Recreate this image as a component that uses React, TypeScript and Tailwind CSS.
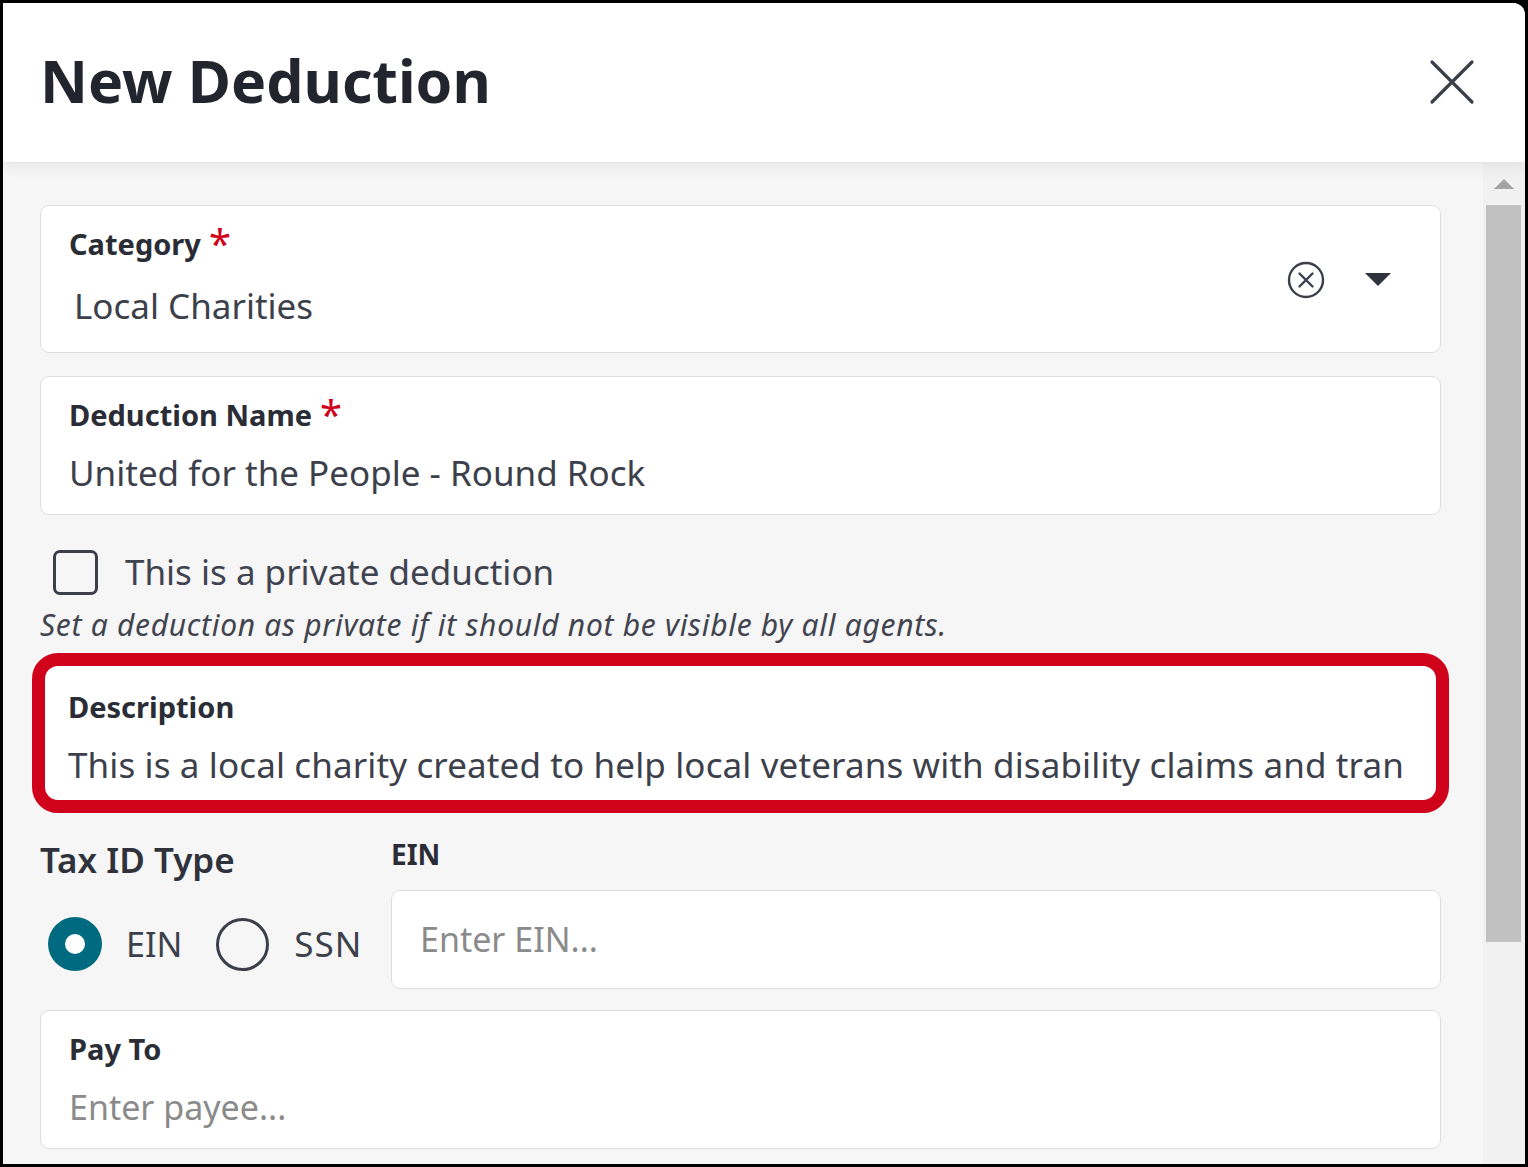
import React from "react";

const font = { fontFamily: "'Noto Sans', Lato, sans-serif" };

function Label({ children, required }: { children: React.ReactNode; required?: boolean }) {
  return (
    <div className="flex items-start h-[36px] leading-[36px] text-[29px] font-bold text-[#2a2d36]">
      <span>{children}</span>
      {required && <span className="ml-[8px] text-[#d0021b] text-[40px] leading-[34px] font-normal">*</span>}
    </div>
  );
}

export default function App() {
  return (
    <div className="w-[1528px] h-[1167px] bg-black p-[3px]" style={font}>
      <div className="w-full h-full bg-white rounded-tr-[12px] overflow-hidden flex flex-col">
        {/* Header */}
        <div className="relative z-10 h-[160px] shrink-0 bg-white flex items-center justify-between pl-[37px] pr-[50px] shadow-[0_3px_14px_rgba(0,0,0,0.07)] border-b border-[#e6e6e6]">
          <h1 className="text-[59px] font-bold text-[#23252e] leading-none pb-[4px]">New Deduction</h1>
          <svg width="46" height="46" viewBox="0 0 46 46" className="mt-[-2px]">
            <path d="M3 3 L43 43 M43 3 L3 43" stroke="#3a3f4a" strokeWidth="3.2" strokeLinecap="round" />
          </svg>
        </div>
        {/* Body */}
        <div className="flex-1 flex min-h-0">
          <div className="flex-1 bg-[#f6f6f6] pl-[37px] pr-[42px] pt-[42px] flex flex-col">
            {/* Category */}
            <div className="h-[148px] bg-white border border-[#dedede] rounded-[9px] flex items-start pl-[28px] pr-[49px] pt-[20px]">
              <div className="flex-1">
                <Label required>Category</Label>
                <div className="mt-[22px] pl-[5px] h-[44px] leading-[44px] text-[35px] text-[#3c404b]">Local Charities</div>
              </div>
              <div className="flex items-center gap-[40px] mt-[35px]">
                <svg width="38" height="38" viewBox="0 0 38 38">
                  <circle cx="19" cy="19" r="17" fill="none" stroke="#3b3f4a" strokeWidth="2.4" />
                  <path d="M12.5 12.5 L25.5 25.5 M25.5 12.5 L12.5 25.5" stroke="#3b3f4a" strokeWidth="2.4" strokeLinecap="round" />
                </svg>
                <svg width="26" height="14" viewBox="0 0 26 14">
                  <path d="M0 0 H26 L13 13 Z" fill="#2f333d" />
                </svg>
              </div>
            </div>
            {/* Deduction Name */}
            <div className="mt-[23px] h-[139px] bg-white border border-[#dedede] rounded-[9px] pl-[28px] pt-[20px]">
              <Label required>Deduction Name</Label>
              <div className="mt-[18px] h-[44px] leading-[44px] text-[35px] text-[#3c404b]">United for the People - Round Rock</div>
            </div>
            {/* Checkbox */}
            <div className="mt-[34px] flex items-center pl-[13px] h-[46px]">
              <div className="w-[45px] h-[45px] border-[3px] border-[#3b3f4a] rounded-[7px] bg-transparent" />
              <span className="ml-[27px] text-[35px] text-[#3f4350] leading-[46px]">This is a private deduction</span>
            </div>
            <div className="mt-[12px] h-[36px] leading-[36px] text-[30px] tracking-[0.7px] italic text-[#41444e]">
              Set a deduction as private if it should not be visible by all agents.
            </div>
            {/* Description */}
            <div className="relative mt-[18px] h-[144px] bg-white rounded-[12px] pl-[28px] pt-[28px]">
              <div className="absolute -inset-[8px] border-[13px] border-[#d0021b] rounded-[26px] pointer-events-none" />
              <Label>Description</Label>
              <div className="mt-[18px] h-[44px] leading-[44px] text-[35px] tracking-[0.12px] text-[#3c404b] whitespace-nowrap">
                This is a local charity created to help local veterans with disability claims and tran
              </div>
            </div>
            {/* Tax ID */}
            <div className="mt-[33px] flex">
              <div className="w-[351px] shrink-0">
                <div className="h-[44px] leading-[44px] text-[35px] font-semibold text-[#2f323b]">Tax ID Type</div>
                <div className="mt-[34px] flex items-center pl-[8px] h-[56px]">
                  <div className="w-[54px] h-[54px] rounded-full bg-[#006b80] flex items-center justify-center">
                    <div className="w-[20px] h-[20px] rounded-full bg-white" />
                  </div>
                  <span className="ml-[24px] text-[34px] text-[#3c404b]">EIN</span>
                  <div className="ml-[34px] w-[53px] h-[53px] rounded-full border-[3px] border-[#3b3f4a]" />
                  <span className="ml-[25px] text-[35px] tracking-[1px] text-[#3c404b]">SSN</span>
                </div>
              </div>
              <div className="flex-1">
                <div className="h-[32px] leading-[32px] text-[28px] font-bold text-[#2a2d36]">EIN</div>
                <div className="mt-[20px] h-[99px] bg-white border border-[#dedede] rounded-[9px] flex items-center pl-[28px]">
                  <span className="text-[34px] text-[#8a8a8a]">Enter EIN...</span>
                </div>
              </div>
            </div>
            {/* Pay To */}
            <div className="mt-[21px] h-[139px] bg-white border border-[#dedede] rounded-[9px] pl-[28px] pt-[20px] shrink-0">
              <Label>Pay To</Label>
              <div className="mt-[18px] h-[44px] leading-[44px] text-[34px] text-[#8a8a8a]">Enter payee...</div>
            </div>
          </div>
          {/* Scrollbar */}
          <div className="w-[42px] shrink-0 bg-[#f1f1f1] flex flex-col items-center">
            <div className="h-[42px] flex items-center justify-center">
              <svg width="20" height="10" viewBox="0 0 20 10">
                <path d="M0 10 L10 0 L20 10 Z" fill="#a3a3a3" />
              </svg>
            </div>
            <div className="w-[35px] h-[737px] bg-[#c1c1c1] -ml-[1px]" />
          </div>
        </div>
      </div>
    </div>
  );
}
